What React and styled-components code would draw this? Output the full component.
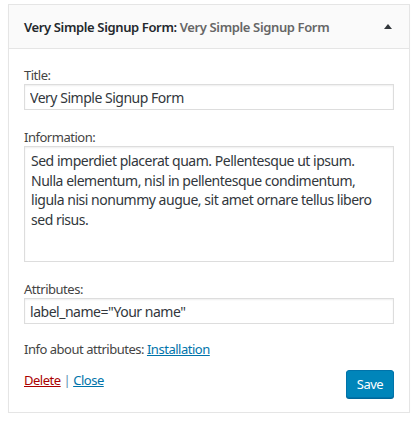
import styled, { createGlobalStyle } from "styled-components";

const GlobalStyle = createGlobalStyle`
  html, body {
    margin: 0;
    padding: 0;
    background: #fff;
  }
  body {
    font-family: "Noto Sans", "Liberation Sans", sans-serif;
    letter-spacing: -0.03em;
    color: #444;
  }
`;

const Page = styled.div`
  padding: 4px 9px 0 8px;
`;

const Widget = styled.div`
  width: 400px;
  border: 1px solid #e5e5e5;
  background: #fff;
  box-shadow: 0 1px 1px rgba(0, 0, 0, 0.04);
`;

const Header = styled.div`
  display: flex;
  align-items: center;
  justify-content: space-between;
  height: 43px;
  padding: 0 15px;
  background: #fafafa;
  border-bottom: 1px solid #e5e5e5;
`;

const HeaderTitle = styled.h3`
  margin: 0;
  font-size: 13px;
  font-weight: 600;
  letter-spacing: -0.37px;
  color: #23282d;
  white-space: nowrap;
`;

const InTitle = styled.span`
  color: #666;
`;

const Toggle = styled.span`
  width: 0;
  height: 0;
  margin-right: 2px;
  border-left: 4px solid transparent;
  border-right: 4px solid transparent;
  border-bottom: 5px solid #32373c;
`;

const Body = styled.div`
  display: flex;
  flex-direction: column;
  padding: 17px 15px 14px;
`;

const Field = styled.div`
  display: flex;
  flex-direction: column;
  margin-bottom: ${(p) => p.$gap}px;
`;

const Label = styled.label`
  font-size: 13px;
  line-height: 18px;
  color: #444;
`;

const TextInput = styled.input`
  box-sizing: border-box;
  width: 370px;
  height: 26px;
  margin: 0;
  padding: 2px 5px;
  border: 1px solid #ddd;
  box-shadow: inset 0 1px 2px rgba(0, 0, 0, 0.07);
  font-family: inherit;
  letter-spacing: inherit;
  font-size: 14px;
  color: #32373c;
  outline: none;
`;

const TextArea = styled.textarea`
  box-sizing: border-box;
  width: 370px;
  height: 116px;
  margin: 0;
  padding: 4px 6px 3px;
  border: 1px solid #ddd;
  box-shadow: inset 0 1px 2px rgba(0, 0, 0, 0.07);
  font-family: inherit;
  letter-spacing: inherit;
  font-size: 14px;
  line-height: 19.6px;
  color: #32373c;
  resize: none;
  outline: none;
`;

const Note = styled.p`
  margin: 0 0 13px;
  font-size: 13px;
  line-height: 18px;
  color: #444;
`;

const Link = styled.a`
  color: ${(p) => (p.$danger ? "#a00" : "#0073aa")};
  text-decoration: underline;
`;

const Footer = styled.div`
  display: flex;
  justify-content: space-between;
  align-items: flex-start;
`;

const Actions = styled.div`
  font-size: 13px;
  line-height: 18px;
  color: #5b8fb0;
`;

const SaveButton = styled.button`
  box-sizing: border-box;
  width: 48px;
  height: 28px;
  margin-top: -1px;
  padding: 0 0 2px;
  border: 1px solid #0073aa;
  border-radius: 3px;
  background: #0085ba;
  box-shadow: 0 1px 0 #006799;
  color: #fff;
  font-family: inherit;
  letter-spacing: inherit;
  font-size: 13px;
  line-height: 26px;
  cursor: pointer;
`;

export default function App() {
  return (
    <>
      <GlobalStyle />
      <Page>
        <Widget>
          <Header>
            <HeaderTitle>
              Very Simple Signup Form:<InTitle> Very Simple Signup Form</InTitle>
            </HeaderTitle>
            <Toggle />
          </Header>
          <Body>
            <Field $gap={18}>
              <Label>Title:</Label>
              <TextInput defaultValue="Very Simple Signup Form" />
            </Field>
            <Field $gap={18}>
              <Label>Information:</Label>
              <TextArea
                defaultValue="Sed imperdiet placerat quam. Pellentesque ut ipsum. Nulla elementum, nisl in pellentesque condimentum, ligula nisi nonummy augue, sit amet ornare tellus libero sed risus."
              />
            </Field>
            <Field $gap={16}>
              <Label>Attributes:</Label>
              <TextInput defaultValue={'label_name="Your name"'} />
            </Field>
            <Note>
              Info about attributes: <Link href="#">Installation</Link>
            </Note>
            <Footer>
              <Actions>
                <Link href="#" $danger>Delete</Link> | <Link href="#">Close</Link>
              </Actions>
              <SaveButton>Save</SaveButton>
            </Footer>
          </Body>
        </Widget>
      </Page>
    </>
  );
}
